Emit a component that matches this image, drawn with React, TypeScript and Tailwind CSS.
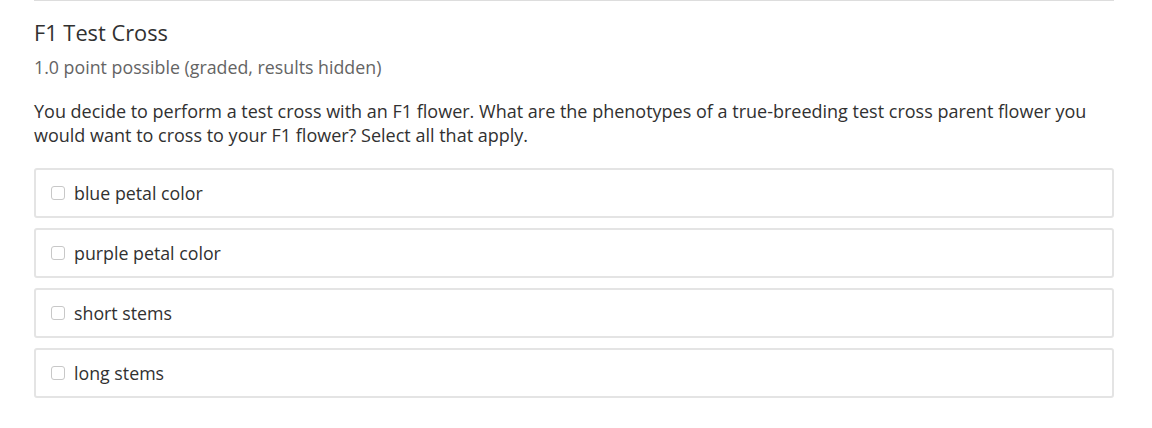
const choices = ["blue petal color", "purple petal color", "short stems", "long stems"];

export default function App() {
  return (
    <main className="bg-white w-[1152px] h-[428px] pl-[34px] pr-[38px] font-['Open_Sans',sans-serif] text-[#313131]">
      <div className="border-t border-[#dddddd] pt-[18px]">
        <h2 className="text-[21.8px] leading-[28px]">F1 Test Cross</h2>
        <p className="mt-[8px] text-[17.8px] leading-[24px] text-[#646464]">1.0 point possible (graded, results hidden)</p>

        <p className="mt-[20px] text-[18px] leading-[24px]">
          You decide to perform a test cross with an F1 flower. What are the phenotypes of a true-breeding test cross parent flower you
          would want to cross to your F1 flower? Select all that apply.
        </p>

        <div className="mt-[21px] flex flex-col gap-[10px]">
          {choices.map((c) => (
            <label key={c} className="flex h-[50px] items-center rounded-[3px] border-2 border-[#e4e4e4] pl-[15px]">
              <span className="h-[14px] w-[14px] rounded-[3px] border border-[#c8c8c8] bg-white" />
              <span className="ml-[9px] text-[17.8px] leading-[24px]">{c}</span>
            </label>
          ))}
        </div>
      </div>
    </main>
  );
}
